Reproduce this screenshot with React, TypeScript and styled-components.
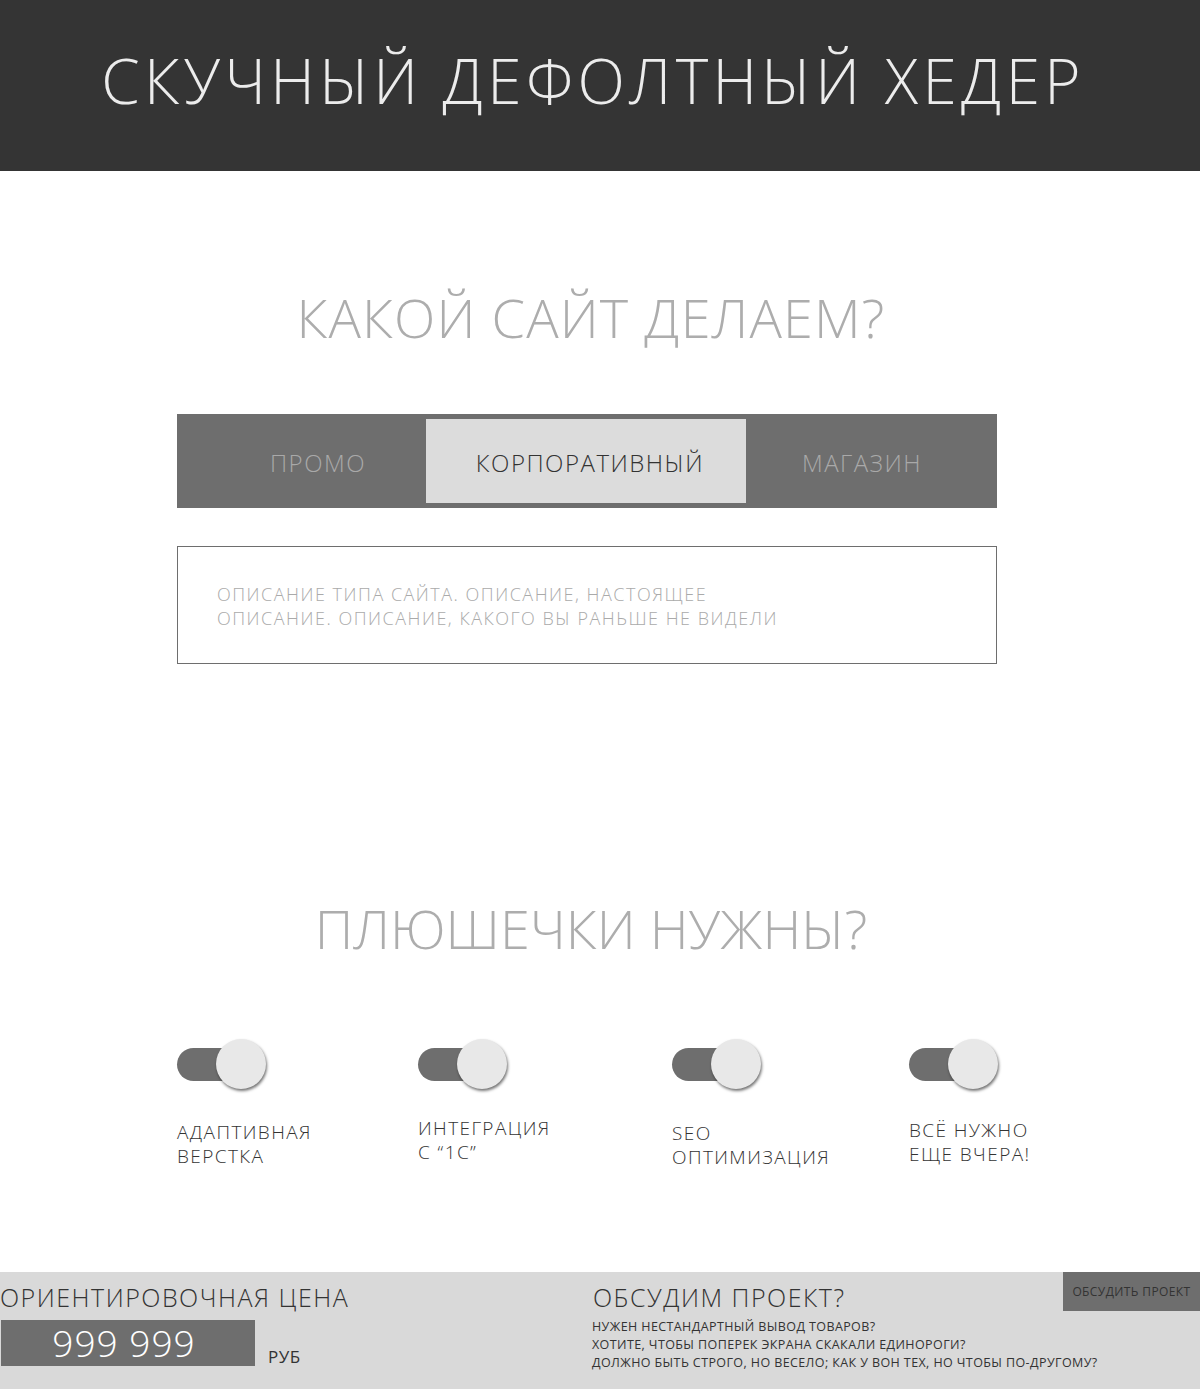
import React, { useState } from 'react';
import styled, { createGlobalStyle } from 'styled-components';

const GlobalStyle = createGlobalStyle`
    body {
        margin: 0;
        background: #ffffff;
        font-family: 'Open Sans', 'Liberation Sans', sans-serif;
        font-weight: 300;
    }
`;

const Page = styled.div`
    width: 1200px;
    display: flex;
    flex-direction: column;
`;

const Header = styled.header`
    height: 171px;
    background: #343434;
    display: flex;
    align-items: center;
    justify-content: center;
`;

const HeaderTitle = styled.h1`
    margin: 0 14px 12px 0;
    font-size: 62px;
    font-weight: 300;
    line-height: 1;
    letter-spacing: 4.3px;
    color: #ececec;
`;

const SectionTitle = styled.h2<{ top: number; spacing: number }>`
    margin: ${(p) => p.top}px 0 0 0;
    padding-right: 18px;
    font-size: 54px;
    font-weight: 300;
    line-height: 1;
    letter-spacing: ${(p) => p.spacing}px;
    color: #adadad;
    text-align: center;
`;

const Content = styled.div`
    width: 820px;
    margin: 0 0 0 177px;
`;

const TabBar = styled.div`
    margin-top: 70px;
    height: 94px;
    box-sizing: border-box;
    padding: 5px;
    background: #6e6e6e;
    display: grid;
    grid-template-columns: 244px 320px 246px;
`;

const Tab = styled.button<{ active: boolean; shift: number }>`
    border: none;
    margin: 0;
    padding: ${(p) => (p.shift >= 0 ? `2px 0 0 ${p.shift}px` : `2px ${-p.shift}px 0 0`)};
    font-family: inherit;
    font-weight: 300;
    font-size: 24px;
    letter-spacing: 1.5px;
    cursor: pointer;
    background: ${(p) => (p.active ? '#dcdcdc' : 'transparent')};
    color: ${(p) => (p.active ? '#333333' : '#a9a9a9')};
`;

const Description = styled.div`
    margin-top: 38px;
    border: 1px solid #6e6e6e;
    padding: 35px 39px 33px;
    font-size: 18px;
    line-height: 24px;
    letter-spacing: 1.5px;
    color: #aaaaaa;
`;

const Features = styled.div`
    margin: 84px 0 0 177px;
    display: grid;
    grid-template-columns: 241px 254px 237px 200px;
`;

const Feature = styled.div`
    display: flex;
    flex-direction: column;
`;

const Toggle = styled.div`
    position: relative;
    width: 90px;
    height: 50px;
    cursor: pointer;
`;

const Track = styled.div`
    position: absolute;
    left: 0;
    top: 9px;
    width: 70px;
    height: 33px;
    border-radius: 17px;
    background: #6e6e6e;
`;

const Knob = styled.div<{ on: boolean }>`
    position: absolute;
    top: 0;
    left: ${(p) => (p.on ? 39 : 0)}px;
    width: 50px;
    height: 50px;
    border-radius: 50%;
    background: #e8e8e8;
    box-shadow: 1px 2px 3px rgba(0, 0, 0, 0.55);
`;

const FeatureLabel = styled.div<{ top: number }>`
    margin-top: ${(p) => p.top}px;
    font-size: 19px;
    line-height: 24px;
    letter-spacing: 1.4px;
    color: #333333;
`;

const Footer = styled.footer`
    margin-top: 103px;
    height: 117px;
    background: #d9d9d9;
    display: grid;
    grid-template-columns: 592px 1fr;
    color: #333333;
`;

const PriceBlock = styled.div`
    display: flex;
    flex-direction: column;
`;

const FooterTitle = styled.div`
    margin-top: 13px;
    font-size: 25px;
    line-height: 1;
    letter-spacing: 1.5px;
    white-space: nowrap;
`;

const PriceRow = styled.div`
    margin-top: 10px;
    display: flex;
    align-items: flex-end;
`;

const PriceBox = styled.div`
    margin-left: 1px;
    width: 254px;
    height: 46px;
    background: #6e6e6e;
    color: #ffffff;
    font-size: 37px;
    line-height: 46px;
    letter-spacing: 1px;
    text-align: center;
    padding-right: 8px;
    box-sizing: border-box;
`;

const Currency = styled.span`
    margin: 0 0 -2px 13px;
    font-size: 17px;
    font-weight: 400;
    letter-spacing: 0.5px;
`;

const ContactBlock = styled.div`
    display: flex;
    flex-direction: column;
`;

const ContactTop = styled.div`
    display: flex;
    justify-content: space-between;
    padding-left: 1px;
`;

const DiscussButton = styled.button`
    width: 137px;
    height: 39px;
    border: none;
    padding: 0;
    background: #6e6e6e;
    color: #333333;
    font-family: inherit;
    font-weight: 400;
    font-size: 12px;
    letter-spacing: 0.4px;
    white-space: nowrap;
    cursor: pointer;
`;

const Questions = styled.div`
    margin-top: 7px;
    font-size: 12.5px;
    font-weight: 400;
    line-height: 18px;
    letter-spacing: 0.4px;
`;

const tabs = [
    { id: 'promo', title: 'ПРОМО', shift: 28 },
    { id: 'corp', title: 'КОРПОРАТИВНЫЙ', shift: 8 },
    { id: 'shop', title: 'МАГАЗИН', shift: -14 },
];

const features = [
    { id: 'adaptive', lines: ['АДАПТИВНАЯ', 'ВЕРСТКА'], top: 31 },
    { id: '1c', lines: ['ИНТЕГРАЦИЯ', 'С “1С”'], top: 27 },
    { id: 'seo', lines: ['SEO', 'ОПТИМИЗАЦИЯ'], top: 32 },
    { id: 'fast', lines: ['ВСЁ НУЖНО', 'ЕЩЕ ВЧЕРА!'], top: 29 },
];

export default function App() {
    const [activeTab, setActiveTab] = useState('corp');
    const [enabled, setEnabled] = useState<Record<string, boolean>>({
        adaptive: true,
        '1c': true,
        seo: true,
        fast: true,
    });

    return (
        <Page>
            <GlobalStyle />
            <Header>
                <HeaderTitle>СКУЧНЫЙ ДЕФОЛТНЫЙ ХЕДЕР</HeaderTitle>
            </Header>

            <SectionTitle top={119} spacing={1.1}>
                КАКОЙ САЙТ ДЕЛАЕМ?
            </SectionTitle>
            <Content>
                <TabBar>
                    {tabs.map((tab) => (
                        <Tab
                            key={tab.id}
                            active={activeTab === tab.id}
                            shift={tab.shift}
                            onClick={() => setActiveTab(tab.id)}
                        >
                            {tab.title}
                        </Tab>
                    ))}
                </TabBar>
                <Description>
                    ОПИСАНИЕ ТИПА САЙТА. ОПИСАНИЕ, НАСТОЯЩЕЕ
                    <br />
                    ОПИСАНИЕ. ОПИСАНИЕ, КАКОГО ВЫ РАНЬШЕ НЕ ВИДЕЛИ
                </Description>
            </Content>

            <SectionTitle top={237} spacing={0}>
                ПЛЮШЕЧКИ НУЖНЫ?
            </SectionTitle>
            <Features>
                {features.map((feature) => (
                    <Feature key={feature.id}>
                        <Toggle onClick={() => setEnabled({ ...enabled, [feature.id]: !enabled[feature.id] })}>
                            <Track />
                            <Knob on={enabled[feature.id]} />
                        </Toggle>
                        <FeatureLabel top={feature.top}>
                            {feature.lines[0]}
                            <br />
                            {feature.lines[1]}
                        </FeatureLabel>
                    </Feature>
                ))}
            </Features>

            <Footer>
                <PriceBlock>
                    <FooterTitle>ОРИЕНТИРОВОЧНАЯ ЦЕНА</FooterTitle>
                    <PriceRow>
                        <PriceBox>999 999</PriceBox>
                        <Currency>РУБ</Currency>
                    </PriceRow>
                </PriceBlock>
                <ContactBlock>
                    <ContactTop>
                        <FooterTitle>ОБСУДИМ ПРОЕКТ?</FooterTitle>
                        <DiscussButton>ОБСУДИТЬ ПРОЕКТ</DiscussButton>
                    </ContactTop>
                    <Questions>
                        НУЖЕН НЕСТАНДАРТНЫЙ ВЫВОД ТОВАРОВ?
                        <br />
                        ХОТИТЕ, ЧТОБЫ ПОПЕРЕК ЭКРАНА СКАКАЛИ ЕДИНОРОГИ?
                        <br />
                        ДОЛЖНО БЫТЬ СТРОГО, НО ВЕСЕЛО; КАК У ВОН ТЕХ, НО ЧТОБЫ ПО-ДРУГОМУ?
                    </Questions>
                </ContactBlock>
            </Footer>
        </Page>
    );
}
